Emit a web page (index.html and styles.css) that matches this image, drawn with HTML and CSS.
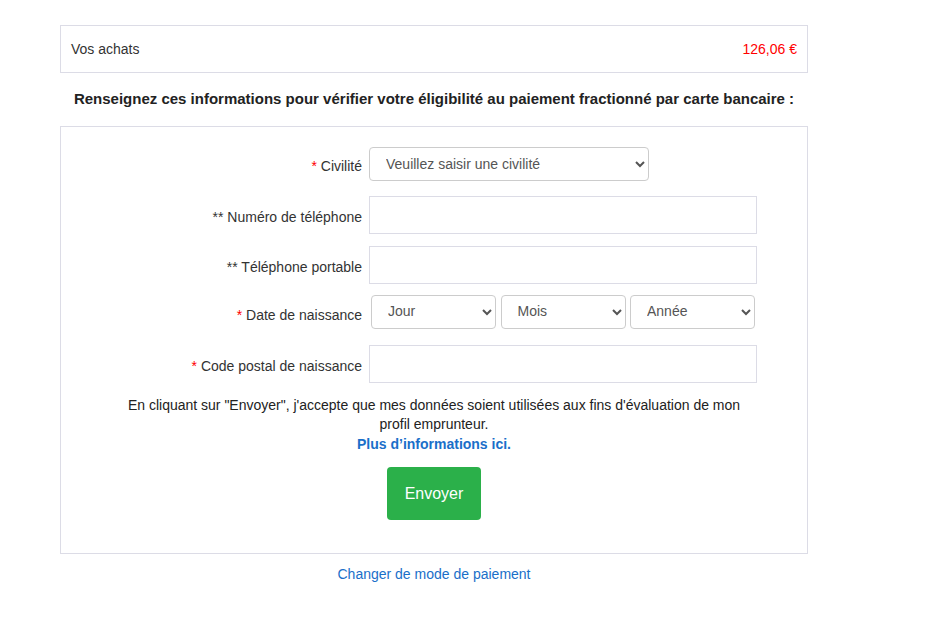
FILE: index.html
```html
<!DOCTYPE html>
<html lang="fr">
<head>
<meta charset="utf-8">
<title>Paiement fractionné</title>
<link rel="stylesheet" href="styles.css">
</head>
<body>
<div class="page">
  <div class="summary">
    <span class="summary-label">Vos achats</span>
    <span class="summary-price">126,06 €</span>
  </div>
  <h2 class="intro">Renseignez ces informations pour vérifier votre éligibilité au paiement fractionné par carte bancaire :</h2>
  <form class="card">
    <div class="row">
      <label class="label"><span class="req">*</span> Civilité</label>
      <div class="control">
        <select class="select select-civ">
          <option>Veuillez saisir une civilité</option>
        </select>
      </div>
    </div>
    <div class="row">
      <label class="label">** Numéro de téléphone</label>
      <div class="control"><input class="input" type="text"></div>
    </div>
    <div class="row">
      <label class="label">** Téléphone portable</label>
      <div class="control"><input class="input" type="text"></div>
    </div>
    <div class="row">
      <label class="label label-date"><span class="req">*</span> Date de naissance</label>
      <div class="control dates">
        <select class="select"><option>Jour</option></select>
        <select class="select"><option>Mois</option></select>
        <select class="select"><option>Année</option></select>
      </div>
    </div>
    <div class="row">
      <label class="label"><span class="req">*</span> Code postal de naissance</label>
      <div class="control"><input class="input" type="text"></div>
    </div>
    <p class="consent">En cliquant sur "Envoyer", j'accepte que mes données soient utilisées aux fins d'évaluation de mon profil emprunteur.<br><a class="more" href="#">Plus d’informations ici.</a></p>
    <div class="actions"><button class="btn" type="button">Envoyer</button></div>
  </form>
  <div class="change"><a href="#">Changer de mode de paiement</a></div>
</div>
</body>
</html>
```
FILE: styles.css
```css
* { box-sizing: border-box; }
body {
  margin: 0;
  background: #fff;
  font-family: "Liberation Sans", Arial, sans-serif;
  font-size: 14px;
  color: #333;
}
.page {
  width: 748px;
  margin-left: 60px;
  padding-top: 25px;
}
.summary {
  height: 48px;
  border: 1px solid #dcdce6;
  display: flex;
  align-items: center;
  justify-content: space-between;
  padding: 0 10px;
}
.summary-label { color: #333; }
.summary-price { color: #ff0000; }
.intro {
  margin: 0;
  padding: 17px 0 18px;
  font-size: 15px;
  font-weight: bold;
  text-align: center;
  line-height: 18px;
  color: #222;
}
.card {
  border: 1px solid #dcdce6;
  padding: 20px 0 33px;
  display: flex;
  flex-direction: column;
}
.row {
  display: grid;
  grid-template-columns: 301px 388px;
  column-gap: 7px;
  align-items: center;
  margin-bottom: 12px;
}
.label {
  text-align: right;
  color: #333;
  padding-top: 4px;
}
.label-date { padding-top: 5px; }
.req { color: #ff0000; }
.control { display: flex; }
.select {
  height: 34px;
  border: 1px solid #ccc;
  border-radius: 4px;
  background: #fff;
  font-family: "Liberation Sans", Arial, sans-serif;
  font-size: 14px;
  color: #555;
  padding: 0 8px 0 12px;
}
.select-civ { width: 280px; }
.dates { gap: 4.5px; padding-left: 2px; }
.dates .select { width: 125px; padding-bottom: 2px; }
.input {
  width: 388px;
  height: 38px;
  border: 1px solid #dcdce6;
  border-radius: 0;
  font-size: 14px;
  padding: 0 8px;
}
.row:nth-child(1) { margin-bottom: 15px; }
.row:nth-child(2) { margin-bottom: 12px; }
.row:nth-child(3) { margin-bottom: 11px; }
.row:nth-child(4) { margin-bottom: 16px; }
.row:nth-child(5) { margin-bottom: 13px; }
.consent {
  margin: 0 auto;
  width: 640px;
  text-align: center;
  line-height: 19px;
  color: #222;
}
.more {
  color: #1a6fc9;
  font-weight: bold;
  text-decoration: none;
  position: relative;
  top: 1px;
}
.actions {
  display: flex;
  justify-content: center;
  margin-top: 14px;
}
.btn {
  width: 94px;
  height: 53px;
  background: #2bb04a;
  color: #fff;
  border: none;
  border-radius: 4px;
  font-family: "Liberation Sans", Arial, sans-serif;
  font-size: 16px;
}
.change {
  text-align: center;
  padding-top: 12px;
}
.change a {
  color: #1a6fc9;
  text-decoration: none;
}
```
